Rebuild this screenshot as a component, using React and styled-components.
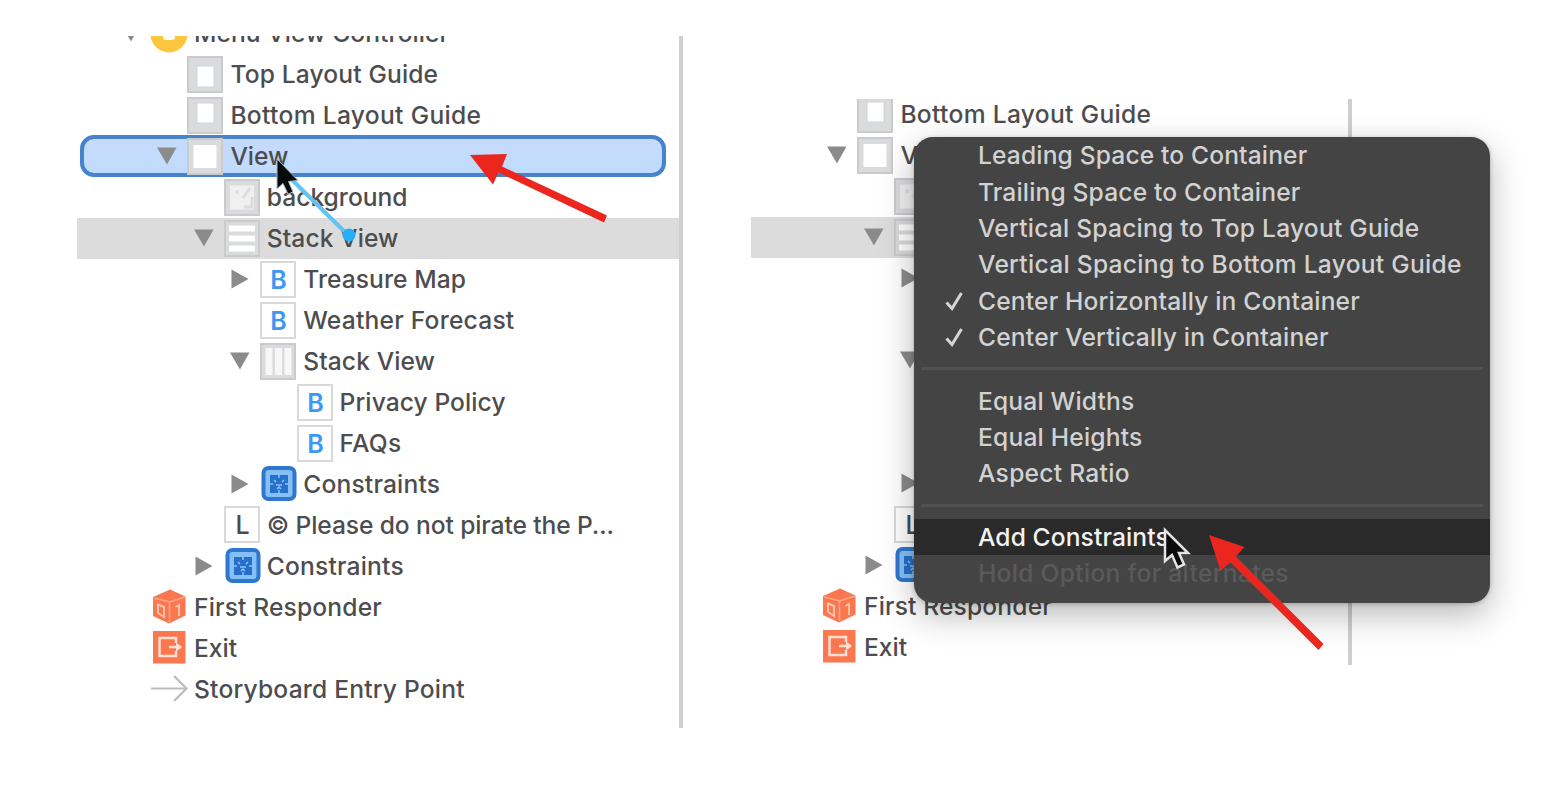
import React from "react";
import styled, { createGlobalStyle, css } from "styled-components";

const Global = createGlobalStyle`
  html, body { margin: 0; background: #fff; }
  body { font-family: Inter, "Liberation Sans", sans-serif; color: #4d4d4f; overflow: hidden; }
`;

const Page = styled.main`
  position: relative;
  box-sizing: border-box;
  width: 1542px;
  height: 790px;
  padding: 36px 0 0 77px;
  display: flex;
  align-items: flex-start;
  gap: 68px;
  overflow: hidden;
  background: #fff;
`;

const Panel = styled.section`
  position: relative;
  box-sizing: border-box;
  flex: none;
  width: ${(p) => p.$width}px;
  height: ${(p) => p.$height}px;
  margin-top: ${(p) => p.$top || 0}px;
  display: flex;
  overflow: hidden;
`;

const Tree = styled.div`
  flex: none;
  width: ${(p) => p.$width}px;
  margin-top: ${(p) => p.$shift}px;
`;

const Divider = styled.div`
  flex: none;
  width: 4px;
  background: #cfcfcf;
`;

const Row = styled.div`
  position: relative;
  display: flex;
  align-items: center;
  box-sizing: border-box;
  height: 40.96px;
  padding-left: ${(p) => p.$base + p.$level * 36.4}px;
  background: ${(p) => (p.$selected ? "#dcdcdc" : "transparent")};
  ${(p) =>
    p.$target &&
    css`
      &::before {
        content: "";
        position: absolute;
        inset: -1px 13px 0 3px;
        box-sizing: border-box;
        border: 4px solid #4583cc;
        border-radius: 14px;
        background: linear-gradient(#c6dafb, #bfdcfd);
      }
    `}
`;

const Disclosure = styled.span`
  position: relative;
  flex: none;
  width: 24px;
  height: 24px;
  margin-right: 8px;
  display: flex;
`;

const IconBox = styled.span`
  position: relative;
  flex: none;
  width: 36px;
  height: 37px;
  margin-right: 7px;
  display: flex;
`;

const Label = styled.span`
  position: relative;
  font-size: 24.6px;
  line-height: 40px;
  font-weight: 500;
  letter-spacing: ${(p) => p.$track || 0}px;
  white-space: nowrap;
`;

const Menu = styled.div`
  position: absolute;
  left: 163px;
  top: 38px;
  width: 576px;
  height: 466px;
  border-radius: 19px;
  background: #444;
  box-shadow: 0 12px 34px rgba(0, 0, 0, 0.28), 0 1px 4px rgba(0, 0, 0, 0.22);
`;

const MenuRow = styled.div`
  display: flex;
  align-items: center;
  height: 36.4px;
  padding-left: 28px;
  font-size: 24.6px;
  font-weight: 500;
  letter-spacing: ${(p) => p.$track || 0}px;
  white-space: nowrap;
  color: ${(p) => (p.$dim ? "#5a5a5a" : p.$active ? "#f2f2f2" : "#d2d2d2")};
  background: ${(p) => (p.$active ? "#2a2a2a" : "transparent")};
`;

const CheckSlot = styled.span`
  display: flex;
  width: 36px;
`;

const Separator = styled.hr`
  height: 3px;
  margin: 12px 7px;
  border: 0;
  background: #515151;
`;

const Overlay = styled.svg`
  position: absolute;
  inset: 0;
  pointer-events: none;
`;

const Triangle = ({ open }) => (
  <svg width="24" height="24" viewBox="0 0 24 24">
    <path d={open ? "M2 3.500H21.500L12 20.500Z" : "M3.500 2.500V21.500L20.500 12Z"} fill="#8b8b8b" />
  </svg>
);

const Frame = ({ children, light }) => (
  <>
    <rect x="1" y="1" width="34" height="35" fill={light ? "#fff" : "#dadbdd"} stroke={light ? "#dad8dc" : "#cbcbcd"} strokeWidth="2" />
    {children}
  </>
);

const drawings = {
  controller: (
    <>
      <circle cx="18" cy="19" r="18.500" fill="#fdc63e" />
      <rect x="12" y="12" width="12" height="13" rx="3" fill="#fff" />
    </>
  ),
  top: <Frame><rect x="10" y="10" width="17" height="21" fill="#fff" stroke="#d0d4d8" /></Frame>,
  bottom: <Frame><rect x="10" y="6" width="17" height="20" fill="#fff" stroke="#d0d4d8" /></Frame>,
  view: <Frame><rect x="6.500" y="7" width="23" height="23" fill="#fff" /></Frame>,
  image: (
    <Frame>
      <rect x="6" y="6.500" width="24" height="24" fill="#f0f0f1" />
      <path d="M13 11v4M26 9l-7 10M28 18v10h-8" fill="none" stroke="#dcdcdf" strokeWidth="3" />
    </Frame>
  ),
  rows: (
    <Frame>
      <path d="M5 8.500h26M5 18.500h26M5 28.500h26" stroke="#fff" strokeWidth="6" />
    </Frame>
  ),
  columns: (
    <Frame>
      <path d="M9 5v27M18.500 5v27M28 5v27" stroke="#f7f7f7" strokeWidth="7" />
    </Frame>
  ),
  button: (
    <Frame light>
      <text x="18.500" y="27.500" textAnchor="middle" fontSize="25" fontWeight="600" fill="#3d97f7">B</text>
    </Frame>
  ),
  label: (
    <Frame light>
      <text x="18.500" y="28" textAnchor="middle" fontSize="25" fontWeight="500" fill="#4b4b4d">L</text>
    </Frame>
  ),
  constraints: (
    <>
      <rect x="3.500" y="3" width="31" height="31" rx="5" fill="#84c0f6" stroke="#2f76cf" strokeWidth="4" />
      <rect x="10" y="10" width="18" height="18" fill="#2670cb" />
      <path d="M19 9v4M19 25v4M9 19h4M25 19h4M14 15l2 2M24 15l-2 2M16 20h6M17 24l2-2 2 2" fill="none" stroke="#8bc5fa" strokeWidth="1.500" />
    </>
  ),
  responder: (
    <>
      <path d="M19 1.500L34.500 8.500V27.500L18 35.500L2 28V9Z" fill="#fb7750" />
      <path d="M3 10l15.500 4L34 9M18.500 14v20" fill="none" stroke="#fda78a" strokeWidth="1.500" />
      <path d="M24.500 19l3.500-2v11M6 16l7 3v10l-6-4V16" fill="none" stroke="#ffc1aa" strokeWidth="2" />
    </>
  ),
  exit: (
    <>
      <rect x="2" y="2" width="32.500" height="32.500" fill="#fb7750" />
      <path d="M25 14v-5H8.500v18H25v-5M18 18h12" fill="none" stroke="#ffe0d3" strokeWidth="2.500" />
      <path d="M25 13.500l6 4.500-6 4.500z" fill="#ffe0d3" />
    </>
  ),
  entry: <path d="M0 18.500H35M23 6L35.500 18.500L23 31" fill="none" stroke="#bdbdbd" strokeWidth="2.200" />,
};

const Icon = ({ name }) => (
  <svg width="37" height="37" viewBox="0 0 37 37" overflow="visible">{drawings[name]}</svg>
);

const items = [
  { text: "Menu View Controller", icon: "controller", level: 0, open: true, track: 0.06 },
  { text: "Top Layout Guide", icon: "top", level: 1, track: 0.14 },
  { text: "Bottom Layout Guide", icon: "bottom", level: 1, track: 0.32 },
  { text: "View", icon: "view", level: 1, open: true, target: true },
  { text: "background", icon: "image", level: 2 },
  { text: "Stack View", icon: "rows", level: 2, open: true, selected: true, track: 0.08 },
  { text: "Treasure Map", icon: "button", level: 3, open: false, track: 0.06 },
  { text: "Weather Forecast", icon: "button", level: 3, track: 0.22 },
  { text: "Stack View", icon: "columns", level: 3, open: true, track: 0.1 },
  { text: "Privacy Policy", icon: "button", level: 4, track: 0.08 },
  { text: "FAQs", icon: "button", level: 4, track: 0.2 },
  { text: "Constraints", icon: "constraints", level: 3, open: false, track: 0.18 },
  { text: "© Please do not pirate the P...", icon: "label", level: 2, track: -0.11 },
  { text: "Constraints", icon: "constraints", level: 2, open: false, track: 0.18 },
  { text: "First Responder", icon: "responder", level: 0, track: 0.15 },
  { text: "Exit", icon: "exit", level: 0 },
  { text: "Storyboard Entry Point", icon: "entry", level: 0, track: 0.19 },
];

// The outline as it stands while the context menu is open over it.
const menuOutline = [
  items[2],
  items[3],
  { icon: "image", level: 2 },
  { icon: "rows", level: 2, open: true, selected: true },
  { level: 3, open: false },
  {},
  { level: 3, open: true },
  {},
  {},
  { level: 3, open: false },
  { icon: "label", level: 2 },
  { icon: "constraints", level: 2, open: false },
  items[14],
  items[15],
];

const Outline = ({ rows, base, width, shift, dragging }) => (
  <Tree $width={width} $shift={shift}>
    {rows.map((r, i) => (
      <Row key={i} $base={base} $level={r.level || 0} $selected={r.selected} $target={dragging && r.target}>
        <Disclosure>{r.open !== undefined && <Triangle open={r.open} />}</Disclosure>
        <IconBox>{r.icon && <Icon name={r.icon} />}</IconBox>
        {r.text && <Label $track={r.track}>{r.text}</Label>}
      </Row>
    ))}
  </Tree>
);

const menuItems = [
  { text: "Leading Space to Container", track: 0.14 },
  { text: "Trailing Space to Container", track: 0.15 },
  { text: "Vertical Spacing to Top Layout Guide", track: 0.22 },
  { text: "Vertical Spacing to Bottom Layout Guide", track: 0.28 },
  { text: "Center Horizontally in Container", checked: true, track: 0.17 },
  { text: "Center Vertically in Container", checked: true, track: 0.18 },
  null,
  { text: "Equal Widths", track: 0.17 },
  { text: "Equal Heights", track: 0.2 },
  { text: "Aspect Ratio", track: 0.27 },
  null,
  { text: "Add Constraints", active: true, track: 0.1 },
  { text: "Hold Option for alternates", dim: true, track: 0.3 },
];

const Check = () => (
  <svg width="24" height="24" viewBox="0 0 24 24">
    <path d="M4.500 13.500L10 19.500L19.500 4" fill="none" stroke="#d6d6d6" strokeWidth="3" />
  </svg>
);

export default function App() {
  return (
    <>
      <Global />
      <Page>
        <Panel $width={606} $height={692}>
          <Outline rows={items} base={42} width={602} shift={-23} dragging />
          <Divider />
        </Panel>
        <Panel $width={791} $height={566} $top={63}>
          <Outline rows={menuOutline} base={38} width={597} shift={-5} />
          <Divider />
          <Menu>
            {menuItems.map((m, i) =>
              m ? (
                <MenuRow key={i} $active={m.active} $dim={m.dim} $track={m.track}>
                  <CheckSlot>{m.checked && <Check />}</CheckSlot>
                  {m.text}
                </MenuRow>
              ) : (
                <Separator key={i} />
              )
            )}
          </Menu>
        </Panel>
        <Overlay width="1542" height="790" viewBox="0 0 1542 790">
          <path d="M283 171L349 236" stroke="#62c3f7" strokeWidth="4" />
          <circle cx="349" cy="235" r="6.500" fill="#27aefa" />
          <path d="M277 159V189L283 183.500L288 194L293 192L288.500 181.500L298 180.500Z" fill="#080a0c" stroke="#a9b9c9" strokeWidth="1" />
          <path d="M1165 530V561L1172 555L1177.500 567.500L1184 564.500L1179 553H1188Z" fill="#0b0b0b" stroke="#e4e4e4" strokeWidth="2.500" />
          <path d="M470 155L507 154L502 166.500L607 215.500L604 222.500L498.500 172.500L493 184.500Z" fill="#ea261f" />
          <path d="M1209 535L1244.500 547L1236 556.500L1323.500 644L1318.500 650L1230.500 562.500L1220.500 570.500Z" fill="#ea261f" />
        </Overlay>
      </Page>
    </>
  );
}
